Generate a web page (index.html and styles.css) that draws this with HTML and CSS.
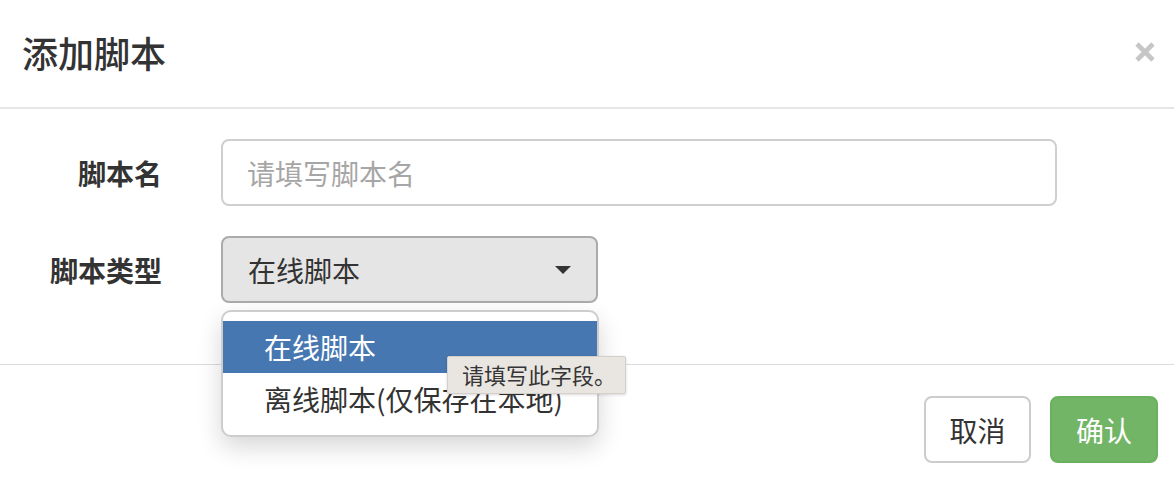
FILE: index.html
```html
<!DOCTYPE html>
<html lang="zh-CN">
<head>
<meta charset="utf-8">
<title>添加脚本</title>
<link rel="stylesheet" href="styles.css">
</head>
<body>
<div class="modal">
  <div class="modal-header">
    <h4 class="modal-title">添加脚本</h4>
    <button class="close" type="button" aria-label="Close">
      <svg width="20" height="20" viewBox="0 0 20 20"><path d="M2 2 L18 18 M18 2 L2 18" stroke="#c6c6c6" stroke-width="4.6" fill="none"/></svg>
    </button>
  </div>
  <div class="modal-body">
    <div class="form-row">
      <label class="form-label">脚本名</label>
      <input class="form-input" type="text" placeholder="请填写脚本名">
    </div>
    <div class="form-row">
      <label class="form-label">脚本类型</label>
      <div class="form-select">
        <span class="select-value">在线脚本</span>
        <span class="caret"></span>
      </div>
    </div>
  </div>
  <div class="modal-footer">
    <button class="btn btn-default" type="button">取消</button>
    <button class="btn btn-success" type="button">确认</button>
  </div>

  <div class="select-popup">
    <div class="option option-active">在线脚本</div>
    <div class="option">离线脚本(仅保存在本地)</div>
  </div>
  <div class="tooltip">请填写此字段。</div>
</div>
</body>
</html>
```
FILE: styles.css
```css
* { box-sizing: border-box; }
html, body { margin: 0; padding: 0; background: #fff; }
body {
  font-family: "Noto Sans CJK SC", "Noto Sans", sans-serif;
  color: #333;
  width: 1174px;
  height: 482px;
  overflow: hidden;
}
.modal {
  position: relative;
  width: 1174px;
  height: 482px;
}
.modal-header {
  height: 109px;
  border-bottom: 2px solid #e5e5e5;
  display: flex;
  align-items: center;
  justify-content: space-between;
  padding: 0 19px 4px 22px;
}
.modal-title {
  margin: 0;
  font-size: 36px;
  font-weight: 500;
  line-height: 50px;
  color: #333;
}
.close {
  border: 0;
  background: transparent;
  padding: 0;
  width: 20px;
  height: 20px;
  display: flex;
  margin-top: 0;
}
.modal-body {
  padding: 30px 0 61px 0;
  display: flex;
  flex-direction: column;
  gap: 30px;
}
.form-row {
  display: flex;
  align-items: center;
  gap: 59px;
}
.form-label {
  width: 162px;
  text-align: right;
  font-size: 28px;
  font-weight: 700;
  line-height: 40px;
  color: #333;
}
.form-input {
  width: 836px;
  height: 67px;
  border: 2px solid #cfcfcf;
  border-radius: 8px;
  padding: 0 24px;
  font-family: inherit;
  font-size: 28px;
  color: #555;
  outline: none;
}
.form-input::placeholder { color: #a6a6a6; }
.form-select {
  width: 377px;
  height: 67px;
  border: 2px solid #ababab;
  border-radius: 8px;
  background: #e5e5e5;
  display: flex;
  align-items: center;
  justify-content: space-between;
  padding: 0 25px 0 25px;
  font-size: 28px;
  line-height: 40px;
  color: #333;
}
.caret {
  width: 0;
  height: 0;
  border-left: 8px solid transparent;
  border-right: 8px solid transparent;
  border-top: 8px solid #333;
}
.modal-footer {
  border-top: 1px solid #dcdcdc;
  display: flex;
  justify-content: flex-end;
  gap: 19px;
  padding: 31px 16px 0 0;
}
.btn {
  height: 67px;
  padding: 0;
  border-radius: 8px;
  font-family: inherit;
  font-size: 28px;
  line-height: 40px;
  border: 2px solid;
  white-space: nowrap;
  display: flex;
  align-items: center;
  justify-content: center;
}
.btn-default {
  background: #fff;
  border-color: #cccccc;
  color: #333;
  width: 107px;
}
.btn-success {
  background: #73b566;
  border-color: #6bb05e;
  color: #fff;
  width: 108px;
}
.select-popup {
  position: absolute;
  left: 221px;
  top: 310px;
  width: 378px;
  height: 127px;
  border: 2px solid #cdcdcd;
  border-radius: 10px;
  background: #fff;
  padding-top: 9px;
  box-shadow: 0 10px 24px rgba(0, 0, 0, 0.16);
}
.option {
  height: 52px;
  line-height: 52px;
  padding-left: 41px;
  font-size: 28px;
  color: #333;
}
.option-active {
  background: #4677b1;
  color: #fff;
}
.tooltip {
  position: absolute;
  left: 447px;
  top: 356px;
  width: 179px;
  height: 38px;
  background: #e9e6e2;
  border: 1px solid #d3d0cc;
  border-radius: 2px;
  box-shadow: 0 1px 3px rgba(0, 0, 0, 0.15);
  padding-left: 14px;
  font-size: 22px;
  line-height: 35px;
  color: #353535;
}
```
